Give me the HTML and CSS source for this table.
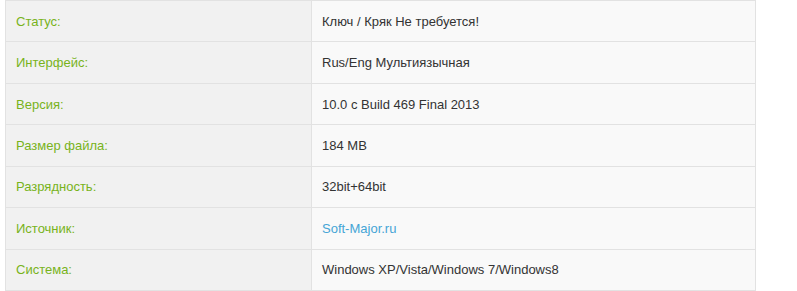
FILE: index.html
```html
<!DOCTYPE html>
<html lang="ru">
<head>
<meta charset="utf-8">
<title>Информация</title>
<link rel="stylesheet" href="styles.css">
</head>
<body>
<table class="info">
  <tr><td class="label">Статус:</td><td class="value">Ключ / Кряк Не требуется!</td></tr>
  <tr><td class="label">Интерфейс:</td><td class="value">Rus/Eng Мультиязычная</td></tr>
  <tr><td class="label">Версия:</td><td class="value">10.0 с Build 469 Final 2013</td></tr>
  <tr><td class="label">Размер файла:</td><td class="value">184 MB</td></tr>
  <tr><td class="label">Разрядность:</td><td class="value">32bit+64bit</td></tr>
  <tr><td class="label">Источник:</td><td class="value"><a class="link" href="#">Soft-Major.ru</a></td></tr>
  <tr><td class="label">Система:</td><td class="value">Windows XP/Vista/Windows 7/Windows8</td></tr>
</table>
</body>
</html>
```
FILE: styles.css
```css
html, body {
  margin: 0;
  padding: 0;
  background: #ffffff;
}
body {
  padding-left: 5px;
  font-family: "Liberation Sans", Arial, sans-serif;
  font-size: 13px;
  color: #333333;
}
.info {
  border-collapse: collapse;
  width: 751px;
  table-layout: fixed;
}
.info tr {
  height: 41.43px;
}
.info td {
  border: 1px solid #e2e2e2;
  padding: 0 10px;
  vertical-align: middle;
}
.label {
  width: 285px;
  background: #f1f1f1;
  color: #78b31b;
}
.value {
  background: #f9f9f9;
  color: #333333;
}
.link {
  color: #45a5d6;
  text-decoration: none;
}
```
